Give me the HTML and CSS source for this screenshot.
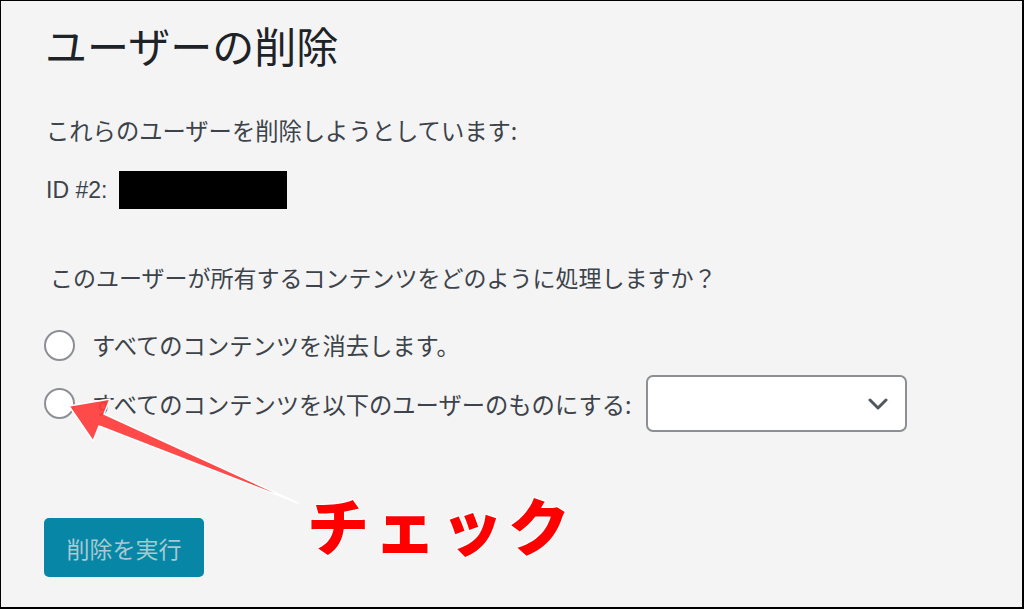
FILE: index.html
```html
<!DOCTYPE html>
<html>
<head>
    <meta charset="utf-8">
    <title>ユーザーの削除</title>
    <link rel="stylesheet" href="styles.css">
</head>
<body>
    <div class="frame">
        <h1 class="title">ユーザーの削除</h1>
        <p class="intro">これらのユーザーを削除しようとしています:</p>
        <div class="user-row">
            <span>ID #2:</span>
            <span class="redacted"></span>
        </div>
        <p class="question">このユーザーが所有するコンテンツをどのように処理しますか？</p>
        <div class="option">
            <span class="radio"></span>
            <span>すべてのコンテンツを消去します。</span>
        </div>
        <div class="option option-select">
            <span class="radio"></span>
            <span>すべてのコンテンツを以下のユーザーのものにする:</span>
            <div class="select">
                <svg width="20" height="12" viewBox="0 0 20 12">
                    <path d="M2 2 L10 10 L18 2" fill="none" stroke="#50575e" stroke-width="3" stroke-linecap="round" stroke-linejoin="round"/>
                </svg>
            </div>
        </div>
        <div class="actions">
            <button class="btn-primary">削除を実行</button>
        </div>

        <!-- annotation -->
        <svg class="arrow" width="1024" height="609" viewBox="0 0 1024 609">
            <polygon points="69,406 110,399 104,414 298,503 99,426 93,441" fill="#ff3b3b" fill-opacity="0.92" stroke="#fff" stroke-width="1.5" stroke-linejoin="round"/>
        </svg>
        <div class="callout">チェック</div>
    </div>
</body>
</html>
```

FILE: styles.css
```css
body{
    margin: 0;
    font-family: "Liberation Sans", "Noto Sans CJK JP", sans-serif;
}
.frame{
    position: relative;
    width: 1024px;
    height: 609px;
    box-sizing: border-box;
    border: 1px solid #000;
    border-right-width: 2px;
    border-bottom-width: 2px;
    background-color: #f4f4f4;
    padding-left: 45px;
    display: flex;
    flex-direction: column;
    align-items: flex-start;
    color: #3c434a;
    font-size: 23px;
    overflow: hidden;
}
.title{
    margin: 19px 0 0 -1px;
    font-family: "Noto Sans CJK JP", sans-serif;
    font-size: 42px;
    font-weight: 400;
    line-height: 50px;
    color: #1d2327;
}
.intro{
    margin: 40px 0 0 0;
    line-height: 40px;
    font-family: "Noto Sans CJK JP", sans-serif;
    font-size: 23.3px;
}
.user-row{
    margin-top: 20px;
    height: 40px;
    display: flex;
    align-items: center;
    gap: 12px;
}
.redacted{
    width: 168px;
    height: 38px;
    background-color: #000;
}
.question{
    margin: 47px 0 0 0;
    padding-left: 4px;
    line-height: 40px;
    font-family: "Noto Sans CJK JP", sans-serif;
}
.option{
    display: flex;
    align-items: center;
    height: 50px;
    margin-top: 23px;
    font-family: "Noto Sans CJK JP", sans-serif;
    font-size: 23.3px;
}
.option-select{
    height: 57px;
    margin-top: 5px;
}
.radio{
    width: 27px;
    height: 27px;
    border: 2px solid #8c8f94;
    border-radius: 50%;
    background-color: #fff;
    margin-left: -2px;
    margin-right: 17px;
}
.select{
    margin-left: 14px;
    width: 261px;
    height: 57px;
    border: 2px solid #8c8f94;
    border-radius: 7px;
    background-color: #fff;
    display: flex;
    align-items: center;
    justify-content: flex-end;
    padding-right: 17px;
    box-sizing: border-box;
}
.actions{
    margin-top: 86px;
}
.btn-primary{
    width: 160px;
    height: 59px;
    margin-left: -2px;
    border: none;
    border-radius: 5px;
    background-color: #0786a5;
    color: #a8c9d4;
    font-family: "Noto Sans CJK JP", sans-serif;
    font-size: 23px;
}
.arrow{
    position: absolute;
    left: -1px;
    top: -1px;
}
.callout{
    position: absolute;
    left: 306px;
    top: 478px;
    font-family: "Noto Sans CJK JP", sans-serif;
    font-weight: 900;
    font-size: 62px;
    letter-spacing: 5px;
    color: #ff0000;
    text-shadow: 1px 1px 0 #fff, -1px -1px 0 #fff, 1px -1px 0 #fff, -1px 1px 0 #fff;
}
```
